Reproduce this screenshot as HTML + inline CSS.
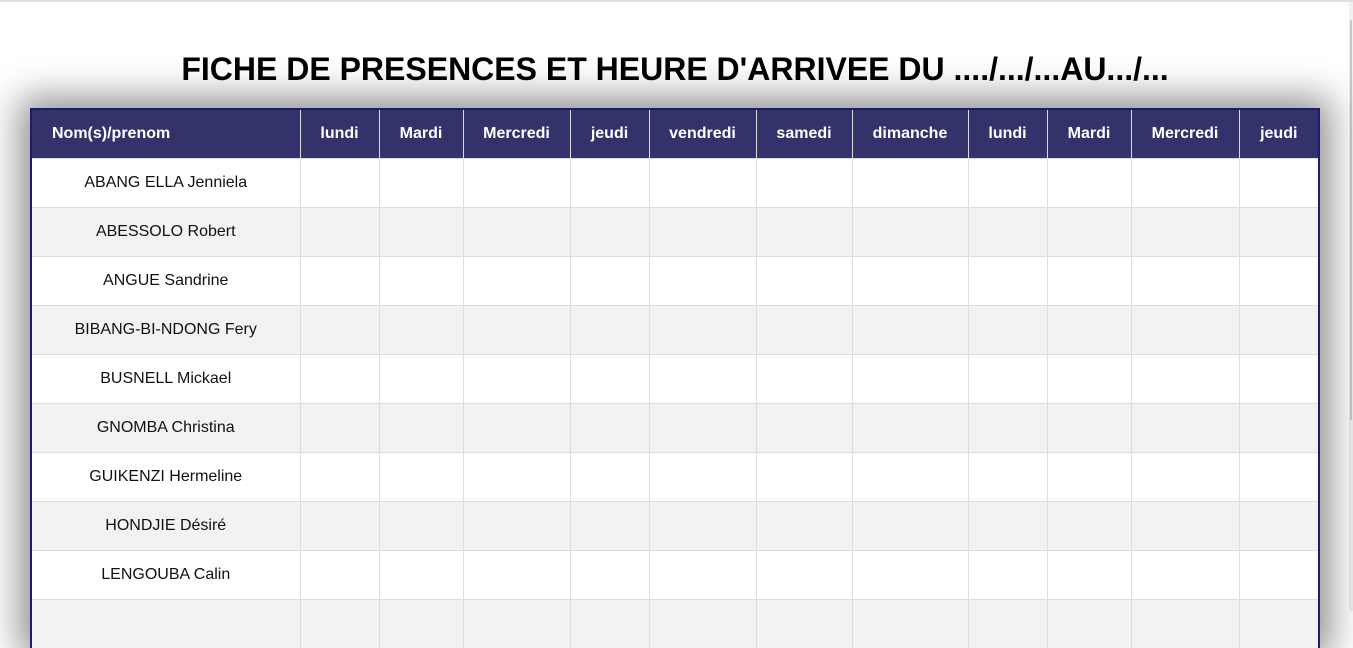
<!DOCTYPE html>
<html><head><style>
html,body{margin:0;padding:0;background:#fff;width:1353px;height:611px;overflow:hidden;font-family:"Liberation Sans",Arial,sans-serif;}
.topline{position:absolute;left:0;top:0;width:1353px;height:2px;background:#e0e0e0;}
.sb{position:absolute;right:0;top:2px;width:4px;height:609px;background:#f0f0f0;}
.sb2{position:absolute;right:1px;top:18px;width:2px;height:400px;background:#c8c8c8;}
h1{position:absolute;left:0;top:51px;width:1350px;margin:0;text-align:center;font-size:32px;font-weight:bold;color:#000;line-height:36px;}
.wrap{position:absolute;left:30px;top:108px;box-shadow:0 0 35px 10px rgba(0,0,0,0.45);border:2px solid #1f1c6b;border-bottom:none;background:#fff;}
table{border-collapse:collapse;table-layout:fixed;}
th{background:#34326b;color:#fff;font-size:16px;font-weight:bold;height:48px;padding:0;border-left:1px solid #ddd;text-align:center;}
th:first-child{border-left:none;text-align:left;padding-left:20px;}
td{height:48px;padding:0;border-left:1px solid #ddd;border-top:1px solid #ddd;font-size:16px;color:#111;text-align:center;}
td:first-child{border-left:none;}
tr:nth-child(odd) td{background:#f2f2f2;}
</style></head><body>
<div class="topline"></div>
<div class="sb"><div class="sb2"></div></div>
<h1>FICHE DE PRESENCES ET HEURE D'ARRIVEE DU ..../.../...AU.../...</h1>
<div class="wrap">
<table>
<colgroup><col style="width:268px"><col style="width:79px"><col style="width:84px"><col style="width:107px"><col style="width:79px"><col style="width:107px"><col style="width:96px"><col style="width:116px"><col style="width:79px"><col style="width:84px"><col style="width:108px"><col style="width:79px"></colgroup>
<tr><th>Nom(s)/prenom</th><th>lundi</th><th>Mardi</th><th>Mercredi</th><th>jeudi</th><th>vendredi</th><th>samedi</th><th>dimanche</th><th>lundi</th><th>Mardi</th><th>Mercredi</th><th>jeudi</th></tr>
<tr><td>ABANG ELLA Jenniela</td><td></td><td></td><td></td><td></td><td></td><td></td><td></td><td></td><td></td><td></td><td></td></tr>
<tr><td>ABESSOLO Robert</td><td></td><td></td><td></td><td></td><td></td><td></td><td></td><td></td><td></td><td></td><td></td></tr>
<tr><td>ANGUE Sandrine</td><td></td><td></td><td></td><td></td><td></td><td></td><td></td><td></td><td></td><td></td><td></td></tr>
<tr><td>BIBANG-BI-NDONG Fery</td><td></td><td></td><td></td><td></td><td></td><td></td><td></td><td></td><td></td><td></td><td></td></tr>
<tr><td>BUSNELL Mickael</td><td></td><td></td><td></td><td></td><td></td><td></td><td></td><td></td><td></td><td></td><td></td></tr>
<tr><td>GNOMBA Christina</td><td></td><td></td><td></td><td></td><td></td><td></td><td></td><td></td><td></td><td></td><td></td></tr>
<tr><td>GUIKENZI Hermeline</td><td></td><td></td><td></td><td></td><td></td><td></td><td></td><td></td><td></td><td></td><td></td></tr>
<tr><td>HONDJIE Désiré</td><td></td><td></td><td></td><td></td><td></td><td></td><td></td><td></td><td></td><td></td><td></td></tr>
<tr><td>LENGOUBA Calin</td><td></td><td></td><td></td><td></td><td></td><td></td><td></td><td></td><td></td><td></td><td></td></tr>
<tr><td>&nbsp;</td><td></td><td></td><td></td><td></td><td></td><td></td><td></td><td></td><td></td><td></td><td></td></tr>
</table>
</div>
</body></html>
